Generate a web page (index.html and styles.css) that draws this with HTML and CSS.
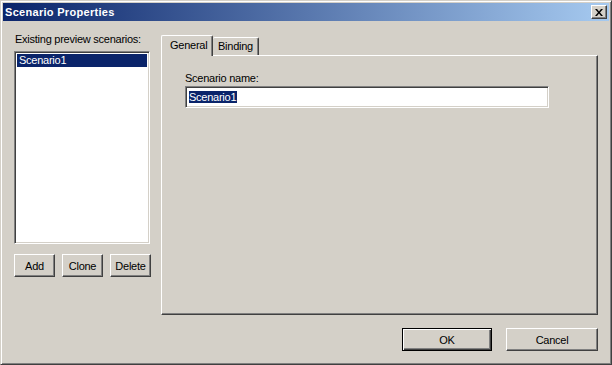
FILE: index.html
```html
<!DOCTYPE html>
<html lang="en">
<head>
    <meta charset="UTF-8">
    <title>Scenario Properties</title>
    <link rel="stylesheet" href="styles.css">
</head>
<body>
    <div class="window">
        <div class="titlebar">
            <span class="title">Scenario Properties</span>
            <button class="close-btn" aria-label="Close">
                <svg width="8" height="7" viewBox="0 0 8 7">
                    <path d="M0 0h2l2 2.5L6 0h2L5 3.5 8 7H6L4 4.5 2 7H0l3-3.5z" fill="#000"/>
                </svg>
            </button>
        </div>

        <div class="client">
            <div class="main">
                <div class="scenarios">
                    <div class="label">Existing preview scenarios:</div>
                    <div class="listbox">
                        <div class="list-item selected">Scenario1</div>
                    </div>
                    <div class="list-buttons">
                        <button class="btn small">Add</button>
                        <button class="btn small">Clone</button>
                        <button class="btn small">Delete</button>
                    </div>
                </div>

                <div class="tabs">
                    <div class="tab-strip">
                        <div class="tab active">General</div>
                        <div class="tab">Binding</div>
                    </div>
                    <div class="tab-panel">
                        <div class="label">Scenario name:</div>
                        <div class="textbox"><span class="text-sel">Scenario1</span></div>
                    </div>
                </div>
            </div>

            <div class="footer">
                <button class="btn ok default">OK</button>
                <button class="btn cancel">Cancel</button>
            </div>
        </div>
    </div>
</body>
</html>
```

FILE: styles.css
```css
* {
    box-sizing: border-box;
}

body {
    margin: 0;
    font-family: 'Liberation Sans', Arial, sans-serif;
    font-size: 11px;
    line-height: 13px;
    letter-spacing: -0.25px;
    color: #000000;
    background: #d4d0c8;
}

/* window frame: 3px raised edge */
.window {
    width: 612px;
    height: 365px;
    background: #d4d0c8;
    border: 1px solid;
    border-color: #d4d0c8 #404040 #404040 #d4d0c8;
    box-shadow: inset 1px 1px #ffffff, inset -1px -1px #808080;
    padding: 2px;
    display: flex;
    flex-direction: column;
}

.titlebar {
    height: 18px;
    margin-bottom: 1px;
    background: linear-gradient(to right, #0a246a, #a6caf0);
    display: flex;
    align-items: center;
    justify-content: space-between;
    padding: 0 2px;
}

.title {
    color: #ffffff;
    font-weight: bold;
    letter-spacing: 0.3px;
}

.close-btn {
    width: 16px;
    height: 14px;
    padding: 0;
    background: #d4d0c8;
    border: 1px solid;
    border-color: #ffffff #404040 #404040 #ffffff;
    box-shadow: inset -1px -1px #808080;
    display: flex;
    align-items: center;
    justify-content: center;
}

.client {
    flex: 1;
    display: flex;
    flex-direction: column;
    padding: 11px;
}

.main {
    display: flex;
    gap: 10px;
    height: 282px;
}

.scenarios {
    width: 137px;
    display: flex;
    flex-direction: column;
}

.scenarios .label {
    padding-left: 1px;
    margin-bottom: 5px;
}

/* sunken 2px field */
.listbox,
.textbox {
    background: #ffffff;
    border: 1px solid;
    border-color: #808080 #ffffff #ffffff #808080;
    box-shadow: inset 1px 1px #404040, inset -1px -1px #d4d0c8;
}

.listbox {
    width: 136px;
    height: 193px;
    padding: 2px;
}

.list-item {
    padding-left: 2px;
    height: 13px;
}

.list-item.selected {
    background: #0a246a;
    color: #ffffff;
}

.list-buttons {
    display: flex;
    gap: 7px;
    margin-top: 10px;
}

.btn {
    font-family: inherit;
    font-size: 11px;
    letter-spacing: inherit;
    height: 23px;
    padding: 0;
    background: #d4d0c8;
    color: #000000;
    border: 1px solid;
    border-color: #ffffff #404040 #404040 #ffffff;
    box-shadow: inset -1px -1px #808080;
}

.btn.small {
    width: 41px;
}

.btn.ok {
    width: 90px;
}

.btn.cancel {
    width: 92px;
}

.btn.default {
    border-color: #000000;
    box-shadow: inset 1px 1px #ffffff, inset -1px -1px #404040, inset -2px -2px #808080;
}

.tabs {
    width: 437px;
    display: flex;
    flex-direction: column;
    padding-top: 2px;
}

.tab-strip {
    display: flex;
    align-items: flex-end;
    height: 20px;
}

.tab {
    height: 18px;
    padding: 2px 4px 0 4px;
    border-top: 1px solid #ffffff;
    border-left: 1px solid #ffffff;
    border-right: 1px solid #404040;
    border-radius: 2px 2px 0 0;
    box-shadow: inset -1px 0 #808080;
    background: #d4d0c8;
}

.tab.active {
    height: 21px;
    width: 52px;
    padding: 3px 0 0 8px;
    margin-bottom: -1px;
    position: relative;
    z-index: 1;
}

.tab:not(.active) {
    width: 46px;
    padding-left: 5px;
    border-left: none;
}

.tab-panel {
    flex: 1;
    border: 1px solid;
    border-color: #ffffff #404040 #404040 #ffffff;
    box-shadow: inset -1px -1px #808080;
    padding: 16px 0 0 23px;
}

.tab-panel .label {
    margin-bottom: 1px;
}

.textbox {
    width: 364px;
    height: 22px;
    padding: 4px 0 0 3px;
}

.text-sel {
    background: #0a246a;
    color: #ffffff;
    padding: 0 1px 0 0;
}

.footer {
    display: flex;
    justify-content: flex-end;
    gap: 14px;
    margin-top: 13px;
}
```
